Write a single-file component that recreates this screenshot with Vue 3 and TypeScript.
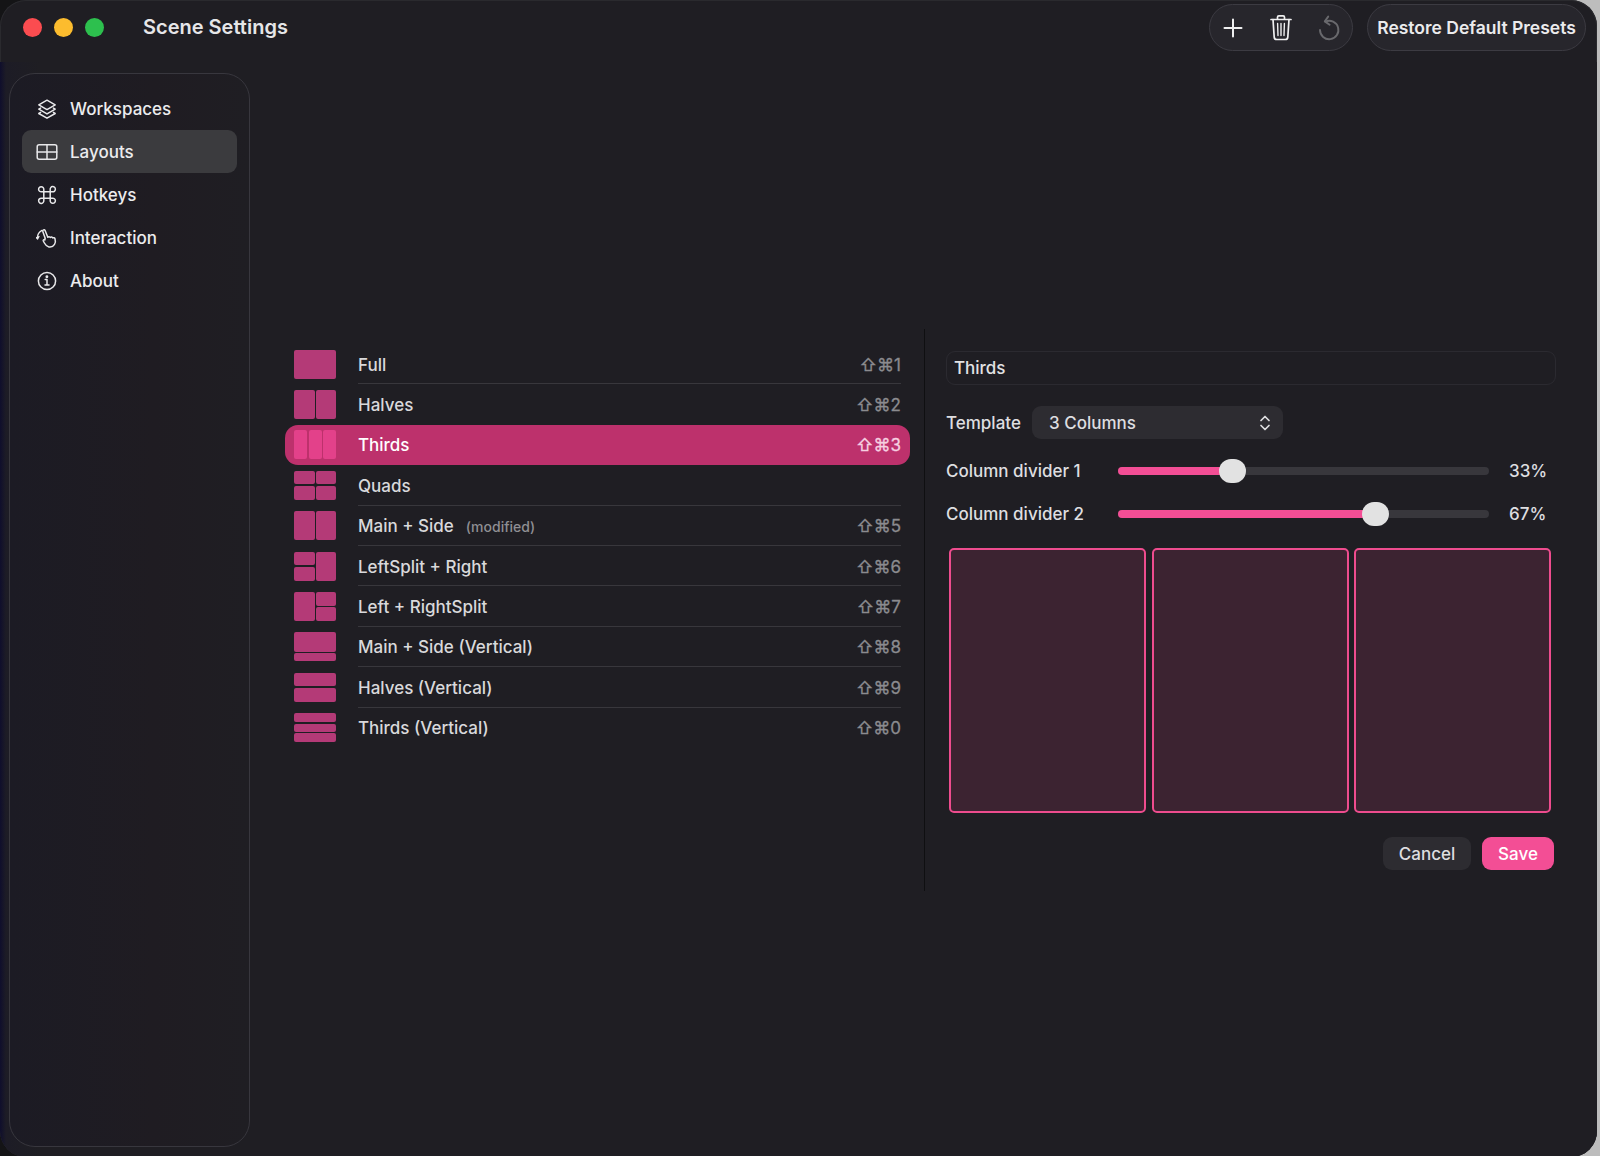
<script setup lang="ts">
interface Block {
  x: number
  y: number
  w: number
  h: number
}

interface Preset {
  name: string
  note?: string
  keys: string
  blocks: Block[]
  selected?: boolean
}

const navItems = [
  { label: 'Workspaces', icon: 'layers' },
  { label: 'Layouts', icon: 'grid', active: true },
  { label: 'Hotkeys', icon: 'command' },
  { label: 'Interaction', icon: 'hand' },
  { label: 'About', icon: 'info' }
]

const blockStyle = (b: Block) => ({
  left: `${b.x}px`,
  top: `${b.y}px`,
  width: `${b.w}px`,
  height: `${b.h}px`
})

const presets: Preset[] = [
  { name: 'Full', keys: '⇧⌘1', blocks: [{ x: 0, y: 0, w: 42, h: 29 }] },
  {
    name: 'Halves',
    keys: '⇧⌘2',
    blocks: [
      { x: 0, y: 0, w: 20.5, h: 29 },
      { x: 22, y: 0, w: 20, h: 29 }
    ]
  },
  {
    name: 'Thirds',
    keys: '⇧⌘3',
    selected: true,
    blocks: [
      { x: 0, y: 0, w: 13, h: 29 },
      { x: 14.5, y: 0, w: 13, h: 29 },
      { x: 29, y: 0, w: 13, h: 29 }
    ]
  },
  {
    name: 'Quads',
    keys: '',
    blocks: [
      { x: 0, y: 0, w: 20.5, h: 13.5 },
      { x: 22, y: 0, w: 20, h: 13.5 },
      { x: 0, y: 15, w: 20.5, h: 14 },
      { x: 22, y: 15, w: 20, h: 14 }
    ]
  },
  {
    name: 'Main + Side',
    note: '(modified)',
    keys: '⇧⌘5',
    blocks: [
      { x: 0, y: 0, w: 20.5, h: 29 },
      { x: 22, y: 0, w: 20, h: 29 }
    ]
  },
  {
    name: 'LeftSplit + Right',
    keys: '⇧⌘6',
    blocks: [
      { x: 0, y: 0, w: 20.5, h: 13.5 },
      { x: 0, y: 15, w: 20.5, h: 14 },
      { x: 22, y: 0, w: 20, h: 29 }
    ]
  },
  {
    name: 'Left + RightSplit',
    keys: '⇧⌘7',
    blocks: [
      { x: 0, y: 0, w: 20.5, h: 29 },
      { x: 22, y: 0, w: 20, h: 13.5 },
      { x: 22, y: 15, w: 20, h: 14 }
    ]
  },
  {
    name: 'Main + Side (Vertical)',
    keys: '⇧⌘8',
    blocks: [
      { x: 0, y: 0, w: 42, h: 19.5 },
      { x: 0, y: 21, w: 42, h: 8 }
    ]
  },
  {
    name: 'Halves (Vertical)',
    keys: '⇧⌘9',
    blocks: [
      { x: 0, y: 0, w: 42, h: 13.5 },
      { x: 0, y: 15, w: 42, h: 14 }
    ]
  },
  {
    name: 'Thirds (Vertical)',
    keys: '⇧⌘0',
    blocks: [
      { x: 0, y: 0, w: 42, h: 9 },
      { x: 0, y: 10.3, w: 42, h: 8.5 },
      { x: 0, y: 20, w: 42, h: 9 }
    ]
  }
]

const sliders = [
  { label: 'Column divider 1', value: 33, fill: 114 },
  { label: 'Column divider 2', value: 67, fill: 257 }
]
</script>

<template>
  <div class="window">
    <header class="titlebar">
      <div class="lights">
        <span class="light red"></span>
        <span class="light yellow"></span>
        <span class="light green"></span>
      </div>
      <h1 class="title">Scene Settings</h1>
      <div class="toolbar">
        <div class="tool-group">
          <button class="tool">
            <svg width="24" height="24" viewBox="0 0 24 24" fill="none" stroke="#efeff0" stroke-width="2" stroke-linecap="round">
              <path d="M12 3.5v17M3.5 12h17" />
            </svg>
          </button>
          <button class="tool">
            <svg width="24" height="27" viewBox="0 0 24 27" fill="none" stroke="#efeff0" stroke-width="1.7" stroke-linecap="round" stroke-linejoin="round">
              <path d="M2 5.5h20M8.5 5.5V3.2q0-1.4 1.4-1.4h4.2q1.4 0 1.4 1.4v2.3" />
              <path d="M4 5.5l1.2 17.6q.2 2.4 2.6 2.4h8.4q2.4 0 2.6-2.4L20 5.5" />
              <path d="M8.6 9.5l.4 12M12 9.5v12M15.4 9.5l-.4 12" stroke-width="1.4" />
            </svg>
          </button>
          <button class="tool">
            <svg width="24" height="26" viewBox="0 0 24 26" fill="none" stroke="#69696d" stroke-width="1.9" stroke-linecap="round" stroke-linejoin="round">
              <path d="M8.5 6.6A9.2 9.2 0 1 1 3 15" />
              <path d="M11.2 1.6L7.8 6.4l4.8 3.4" />
            </svg>
          </button>
        </div>
        <button class="restore">Restore Default Presets</button>
      </div>
    </header>

    <div class="body">
      <aside class="sidebar">
        <div v-for="item in navItems" :key="item.label" class="nav-item" :class="{ active: item.active }">
          <svg class="nav-icon" width="22" height="22" viewBox="0 0 22 22" fill="none" stroke="#e8e8ea" stroke-width="1.5" stroke-linecap="round" stroke-linejoin="round">
            <template v-if="item.icon === 'layers'">
              <path d="M11 2.2l8.2 4.7L11 11.6 2.8 6.9z" />
              <path d="M4.6 10.1L2.8 11.2 11 15.9l8.2-4.7-1.8-1.1" />
              <path d="M4.6 14.4l-1.8 1.1 8.2 4.7 8.2-4.7-1.8-1.1" />
            </template>
            <template v-else-if="item.icon === 'grid'">
              <rect x="1.2" y="3.7" width="19.6" height="14.6" rx="2" />
              <path d="M1.2 11h19.6M11 3.7v14.6" />
            </template>
            <template v-else-if="item.icon === 'command'">
              <path d="M7.8 7.8h6.4v6.4H7.8zM7.8 7.8H5.6a2.6 2.6 0 1 1 2.2-2.4zM14.2 7.8V5.6a2.6 2.6 0 1 1 2.4 2.2zM7.8 14.2v2.2a2.6 2.6 0 1 1-2.4-2.2zM14.2 14.2h2.2a2.6 2.6 0 1 1-2.2 2.4z" />
            </template>
            <template v-else-if="item.icon === 'hand'">
              <path d="M1.6 12A8.4 8.4 0 0 1 6 3.4M3 9.5l-1.4 2.5-1.5-1.6" stroke-width="1.3" />
              <path d="M9.2 11.2L6.8 4.4c-.5-1.500 1.700-2.300 2.300-.9l2.700 6.800c.6-1 2-.8 2.500.2.700-.8 2-.5 2.400.4.900-.5 2-.1 2.300.9.600 2 .5 4-.5 5.500-1.200 2-3.500 3-5.600 2.600-2-.4-3.400-1.800-4.500-3.900l-1.100-2c-.5-1 .8-1.800 1.500-1z" />
            </template>
            <template v-else>
              <circle cx="11" cy="11" r="8.6" />
              <path d="M9.2 9.6H11v5.2M9 15h4" />
              <circle cx="10.9" cy="6.8" r=".7" fill="#e8e8ea" />
            </template>
          </svg>
          <span>{{ item.label }}</span>
        </div>
      </aside>

      <main class="content">
        <section class="preset-list">
          <div v-for="preset in presets" :key="preset.name" class="row" :class="{ selected: preset.selected }">
            <div class="thumb">
              <span v-for="(b, i) in preset.blocks" :key="i" class="block" :style="blockStyle(b)"></span>
            </div>
            <div class="row-main">
              <span class="row-name">{{ preset.name }}</span>
              <span v-if="preset.note" class="row-note">{{ preset.note }}</span>
              <span class="row-keys">{{ preset.keys }}</span>
            </div>
          </div>
        </section>

        <section class="editor">
          <div class="name-field">Thirds</div>
          <div class="template-row">
            <span class="label">Template</span>
            <div class="select">
              <span>3 Columns</span>
              <svg width="12" height="18" viewBox="0 0 12 18" fill="none" stroke="#dedee0" stroke-width="1.7" stroke-linecap="round" stroke-linejoin="round">
                <path d="M2 6.5L6 2.5l4 4M2 11.5l4 4 4-4" />
              </svg>
            </div>
          </div>
          <div class="sliders">
            <div v-for="s in sliders" :key="s.label" class="slider-row">
              <span class="slider-label">{{ s.label }}</span>
              <div class="track">
                <div class="track-fill" :style="{ width: `${s.fill}px` }"></div>
                <div class="track-thumb" :style="{ left: `${s.fill}px` }"></div>
              </div>
              <span class="slider-value">{{ s.value }}%</span>
            </div>
          </div>
          <div class="preview">
            <div class="pane"></div>
            <div class="pane"></div>
            <div class="pane"></div>
          </div>
          <div class="actions">
            <button class="btn cancel">Cancel</button>
            <button class="btn save">Save</button>
          </div>
        </section>
      </main>
    </div>
  </div>
</template>

<style>
html,
body {
  margin: 0;
  height: 1156px;
  overflow: hidden;
  background: linear-gradient(90deg, #141416 0 50%, #bdbdbd 50% 100%);
}
</style>

<style scoped>
.window {
  width: 1597px;
  height: 1157px;
  box-sizing: border-box;
  border-radius: 26px;
  box-shadow: inset 0 0 0 1px #2a2a2e;
  background: #1f1e23;
  color: #e8e8ea;
  font-family: Inter, "Liberation Sans", sans-serif;
  font-size: 17px;
  display: flex;
  flex-direction: column;
  overflow: hidden;
}

button {
  font-family: inherit;
  color: inherit;
  background: none;
  border: none;
  padding: 0;
}

.titlebar {
  height: 62px;
  flex: none;
  display: flex;
  align-items: flex-start;
  padding: 4px 11px 0 23px;
  box-sizing: border-box;
}

.lights {
  display: flex;
  gap: 12px;
  margin-top: 14px;
}

.light {
  width: 19px;
  height: 19px;
  border-radius: 50%;
}

.red {
  background: #fb4c50;
}

.yellow {
  background: #fcbc2e;
}

.green {
  background: #2dc04e;
}

.title {
  margin: 11px 0 0 39px;
  font-size: 20px;
  line-height: 25px;
  font-weight: 600;
  color: #e6e6e8;
}

.toolbar {
  margin-left: auto;
  display: flex;
  gap: 14px;
}

.tool-group,
.restore {
  height: 47px;
  box-sizing: border-box;
  border: 1px solid #3c3b42;
  border-radius: 24px;
  background: #27262c;
}

.tool-group {
  width: 144px;
  display: flex;
  align-items: center;
  justify-content: space-between;
  padding: 0 4px;
}

.tool {
  width: 38px;
  display: flex;
  justify-content: center;
}

.restore {
  width: 219px;
  font-size: 17.5px;
  font-weight: 600;
  color: #ebebed;
}

.body {
  flex: 1;
  min-height: 0;
  display: flex;
  padding: 11px 0 10px 9px;
  background: linear-gradient(90deg, #0f0e2c 0, #1d1c26 6px, #1f1e23 40px);
}

.sidebar {
  width: 241px;
  flex: none;
  box-sizing: border-box;
  border: 1px solid #38373e;
  border-radius: 26px;
  padding: 13px 12px;
  background: linear-gradient(90deg, #1c1b24 0, #1f1c22 60%, #1f1e23 100%);
  display: flex;
  flex-direction: column;
}

.nav-item {
  height: 43px;
  display: flex;
  align-items: center;
  gap: 12px;
  padding-left: 14px;
  border-radius: 9px;
  color: #ececee;
  font-weight: 500;
}

.nav-item.active {
  background: #3b3b3e;
}

.nav-icon {
  flex: none;
}

.content {
  flex: 1;
  display: flex;
  align-items: center;
  padding-left: 35px;
}

.preset-list {
  width: 625px;
  height: 562px;
  box-sizing: border-box;
  padding-top: 15px;
  flex: none;
  display: flex;
  flex-direction: column;
}

.row {
  height: 40.4px;
  flex: none;
  display: flex;
  align-items: center;
  gap: 22px;
  padding: 0 9px;
  border-radius: 13px;
}

.thumb {
  position: relative;
  width: 42px;
  height: 29px;
  flex: none;
}

.block {
  position: absolute;
  border-radius: 2px;
  background: #b43a77;
}

.row.selected {
  background: #bd316c;
}

.row.selected .block {
  background: #e3418a;
}

.row-main {
  flex: 1;
  align-self: stretch;
  display: flex;
  align-items: center;
  padding-top: 2px;
  border-bottom: 1px solid #38373c;
  color: #d9d9db;
  font-weight: 500;
}

.row:nth-child(2) .row-main,
.row.selected .row-main,
.row:last-child .row-main {
  border-bottom-color: transparent;
}

.row.selected .row-name {
  color: #fff;
}

.row-note {
  margin-left: 12px;
  font-size: 14px;
  color: #8f8f93;
}

.row-keys {
  margin-left: auto;
  font-family: Inter, "DejaVu Sans", sans-serif;
  font-size: 17px;
  font-weight: 400;
  -webkit-text-stroke: 0.3px currentColor;
  color: #8b8b8f;
}

.row.selected .row-keys {
  color: #f6cfe0;
}

.editor {
  width: 632px;
  height: 562px;
  flex: none;
  box-sizing: border-box;
  margin-left: 14px;
  padding: 22px 0 0 21px;
  border-left: 1px solid #0f0f11;
  display: flex;
  flex-direction: column;
  font-weight: 500;
}

.name-field {
  width: 610px;
  height: 34px;
  box-sizing: border-box;
  border: 1px solid #2b2a30;
  border-radius: 9px;
  padding-left: 7px;
  line-height: 33px;
  color: #e2e2e4;
}

.template-row {
  display: flex;
  align-items: center;
  margin-top: 21px;
}

.label {
  width: 86px;
  color: #dedee0;
}

.select {
  width: 251px;
  height: 33px;
  box-sizing: border-box;
  background: #2d2c31;
  border-radius: 9px;
  padding: 0 12px 0 17px;
  display: flex;
  align-items: center;
  justify-content: space-between;
  color: #dedee0;
}

.sliders {
  display: flex;
  flex-direction: column;
  gap: 19px;
  margin-top: 20px;
}

.slider-row {
  height: 24px;
  display: flex;
  align-items: center;
}

.slider-label {
  width: 172px;
  flex: none;
  color: #dedee0;
}

.track {
  position: relative;
  width: 371px;
  height: 8px;
  flex: none;
  border-radius: 4px;
  background: #38373c;
}

.track-fill {
  height: 100%;
  border-radius: 4px;
  background: #f34e95;
}

.track-thumb {
  position: absolute;
  top: -8px;
  width: 27px;
  height: 24px;
  margin-left: -13.5px;
  border-radius: 12px;
  background: #e2e2e2;
}

.slider-value {
  margin-left: 20px;
  color: #dedee0;
}

.preview {
  width: 602px;
  height: 265px;
  box-sizing: border-box;
  margin: 22px 0 0 3px;
  display: grid;
  grid-template-columns: 197px 197px 197px;
  justify-content: space-between;
}

.pane {
  box-sizing: border-box;
  border: 2px solid #ee4c8e;
  border-radius: 5px;
  background: #3c2331;
}

.actions {
  width: 608px;
  display: flex;
  justify-content: flex-end;
  gap: 11px;
  margin-top: 24px;
}

.btn {
  height: 33px;
  border-radius: 9px;
  font-size: 17px;
  font-weight: 500;
}

.cancel {
  width: 88px;
  background: #2d2c31;
  color: #dedee0;
}

.save {
  width: 72px;
  background: #f34e95;
  color: #fff;
}
</style>
